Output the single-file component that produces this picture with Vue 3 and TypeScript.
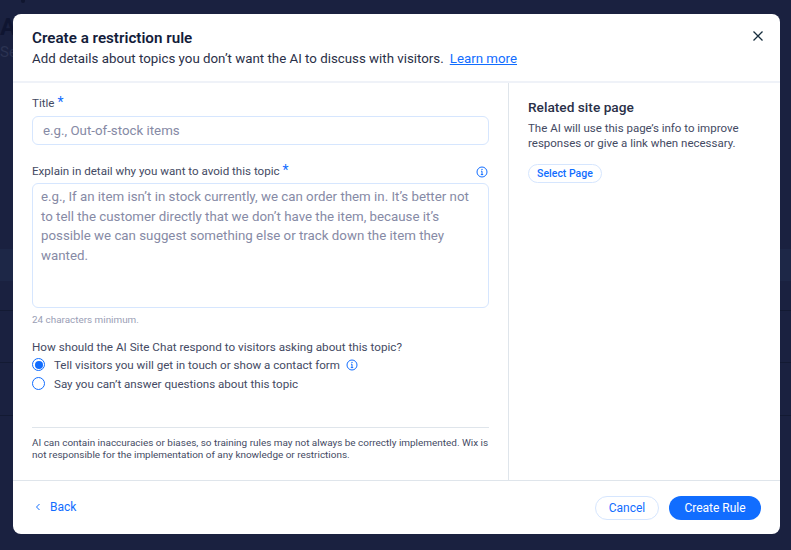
<script setup lang="ts">
const radios = [
  { label: 'Tell visitors you will get in touch or show a contact form', checked: true, info: true },
  { label: "Say you can’t answer questions about this topic", checked: false, info: false },
]
</script>

<template>
  <div class="page">
    <div class="ghost g-top"></div>
    <div class="ghost g-a">A</div>
    <div class="ghost g-se">Se</div>
    <div class="ghost g-ls">ls</div>
    <div class="band"></div>
    <div class="rule r1"></div>
    <div class="rule r2"></div>
    <div class="rule r3"></div>
    <div class="modal">
      <header class="head">
        <h1>Create a restriction rule</h1>
        <p>Add details about topics you don’t want the AI to discuss with visitors.<a class="learn">Learn more</a></p>
        <svg class="close" width="12" height="12" viewBox="0 0 12 12"><path d="M1.5 1.5l9 9M10.5 1.5l-9 9" stroke="#162d3d" stroke-width="1.3" fill="none"/></svg>
      </header>
      <div class="body">
        <section class="left">
          <div class="label title-label">Title <span class="star">*</span></div>
          <div class="input ph">e.g., Out-of-stock items</div>
          <div class="label why-label">
            <span>Explain in detail why you want to avoid this topic <span class="star">*</span></span>
            <svg class="info end" width="12" height="12" viewBox="0 0 12 12"><circle cx="6" cy="6" r="5" stroke="#116dff" fill="none"/><path d="M6 5.2v3.4M4.8 8.6h2.4M5 5.2h1" stroke="#116dff" fill="none"/><circle cx="6" cy="3.4" r=".7" fill="#116dff"/></svg>
          </div>
          <div class="textarea ph">e.g., If an item isn’t in stock currently, we can order them in. It’s better not to tell the customer directly that we don’t have the item, because it’s possible we can suggest something else or track down the item they wanted.</div>
          <div class="min">24 characters minimum.</div>
          <div class="question">How should the AI Site Chat respond to visitors asking about this topic?</div>
          <div v-for="r in radios" :key="r.label" class="radio">
            <span class="dot" :class="{ on: r.checked }"></span>
            <span>{{ r.label }}</span>
            <svg v-if="r.info" class="info inline" width="12" height="12" viewBox="0 0 12 12"><circle cx="6" cy="6" r="5" stroke="#116dff" fill="none"/><path d="M6 5.2v3.4M4.8 8.6h2.4M5 5.2h1" stroke="#116dff" fill="none"/><circle cx="6" cy="3.4" r=".7" fill="#116dff"/></svg>
          </div>
          <div class="disclaimer">AI can contain inaccuracies or biases, so training rules may not always be correctly implemented. Wix is not responsible for the implementation of any knowledge or restrictions.</div>
        </section>
        <aside class="right">
          <h2>Related site page</h2>
          <p>The AI will use this page’s info to improve responses or give a link when necessary.</p>
          <button class="select">Select Page</button>
        </aside>
      </div>
      <footer class="foot">
        <a class="back"><svg width="6" height="8" viewBox="0 0 6 8"><path d="M4.5 1L1.5 4l3 3" stroke="#116dff" fill="none"/></svg>Back</a>
        <div class="actions">
          <button class="cancel">Cancel</button>
          <button class="create">Create Rule</button>
        </div>
      </footer>
    </div>
  </div>
</template>

<style>
html, body { margin: 0; background: #1a2140; }
</style>

<style scoped>
.page {
  position: relative; width: 791px; height: 550px; box-sizing: border-box; padding: 14px 11px 16px 13px;
  background: #1a2140; font-family: Roboto, "Liberation Sans", sans-serif; overflow: hidden;
}
.ghost { position: absolute; color: #0f1531; font-weight: 700; }
.g-top { left: 21px; top: 0; width: 4px; height: 3px; border-radius: 0 0 2px 2px; background: #10162f; }
.g-a { left: 0; top: 13px; font-size: 24px; line-height: 28px; }
.g-se { left: 0; top: 44px; font-size: 15px; font-weight: 400; color: #2b3352; line-height: 16px; }
.g-ls { left: 782px; top: 256px; font-size: 12px; font-weight: 400; line-height: 14px; color: #0f1531; }
.band { position: absolute; left: 0; right: 0; top: 249px; height: 32px; background: #1d2747; }
.rule { position: absolute; left: 0; right: 0; height: 1px; background: #131a33; }
.r1 { top: 310px; } .r2 { top: 362px; } .r3 { top: 415px; }
.modal {
  position: relative; height: 520px; background: #fff; border-radius: 8px; display: flex; flex-direction: column; color: #162d3d;
}
.head { position: relative; height: 69px; box-sizing: border-box; padding: 14px 19px 0; border-bottom: 2px solid #eff2f8; }
h1 { margin: 0; font-size: 15.2px; line-height: 20px; font-weight: 600; color: #131c3a; }
.head p { margin: 0; font-size: 13.3px; line-height: 21px; color: #2a3048; }
.learn { margin-left: 6px; color: #116dff; text-decoration: underline; }
.close { position: absolute; right: 16px; top: 16px; }
.body { flex: 1; display: flex; min-height: 0; }
.left { width: 496px; box-sizing: border-box; padding: 12px 19px 0; border-right: 1px solid #dfe5eb; display: flex; flex-direction: column; }
.label { font-size: 11.6px; line-height: 16px; color: #444a63; }
.star { color: #116dff; font-size: 14px; line-height: 0; position: relative; top: 0; }
.input, .textarea { box-sizing: border-box; border: 1px solid #d6e6fe; border-radius: 6px; color: #868aa5; font-size: 13.3px; }
.title-label { height: 18px; }
.input { height: 29px; line-height: 27px; padding: 0 10px; margin-top: 3px; }
.why-label { display: flex; justify-content: space-between; align-items: center; margin-top: 16px; height: 19px; padding-right: 1px; }
.end { position: relative; top: 1px; }
.textarea { height: 125px; margin-top: 3px; padding: 3px 8px; line-height: 19.5px; }
.min { font-size: 9.9px; line-height: 12px; color: #9a9eb5; margin-top: 6px; }
.question { font-size: 11.7px; line-height: 16px; color: #444a63; margin-top: 13px; }
.radio { display: flex; align-items: center; gap: 9px; height: 19px; font-size: 11.6px; color: #444a63; }
.radio:first-of-type { margin-top: 1px; }
.dot { width: 11px; height: 11px; border: 1px solid #116dff; border-radius: 50%; position: relative; background: #fff; }
.dot.on::after { content: ""; position: absolute; inset: 1.5px; border-radius: 50%; background: #116dff; }
.inline { margin-left: -3px; }
.disclaimer { margin-top: 34px; padding-top: 9px; border-top: 1px solid #dfe5eb; font-size: 9.95px; line-height: 12px; color: #444a63; }
.right { flex: 1; padding: 16px 19px; }
h2 { margin: 0; font-size: 13.7px; line-height: 16px; font-weight: 500; color: #2a3048; }
.right p { margin: 6px 0 14px; font-size: 11.5px; line-height: 14.5px; color: #444a63; }
.select { display: block; height: 19px; width: 74px; padding: 0; border: 1px solid #d6e6fe; border-radius: 10px; background: #fff; color: #116dff; font: 500 10.5px Roboto, sans-serif; }
.foot { height: 54px; box-sizing: border-box; border-top: 1px solid #dfe5eb; display: flex; justify-content: space-between; align-items: center; padding: 0 19px 0 22px; }
.back { display: flex; align-items: center; gap: 9px; font-size: 12px; color: #116dff; margin-bottom: 2px; }
.actions { display: flex; gap: 10px; }
.actions button { height: 24px; border-radius: 12px; font: 400 12px Roboto, sans-serif; padding: 0; }
.cancel { width: 64px; background: #fff; border: 1px solid #d6e6fe; color: #116dff; }
.create { width: 92px; background: #116dff; border: 0; color: #fff; }
</style>
